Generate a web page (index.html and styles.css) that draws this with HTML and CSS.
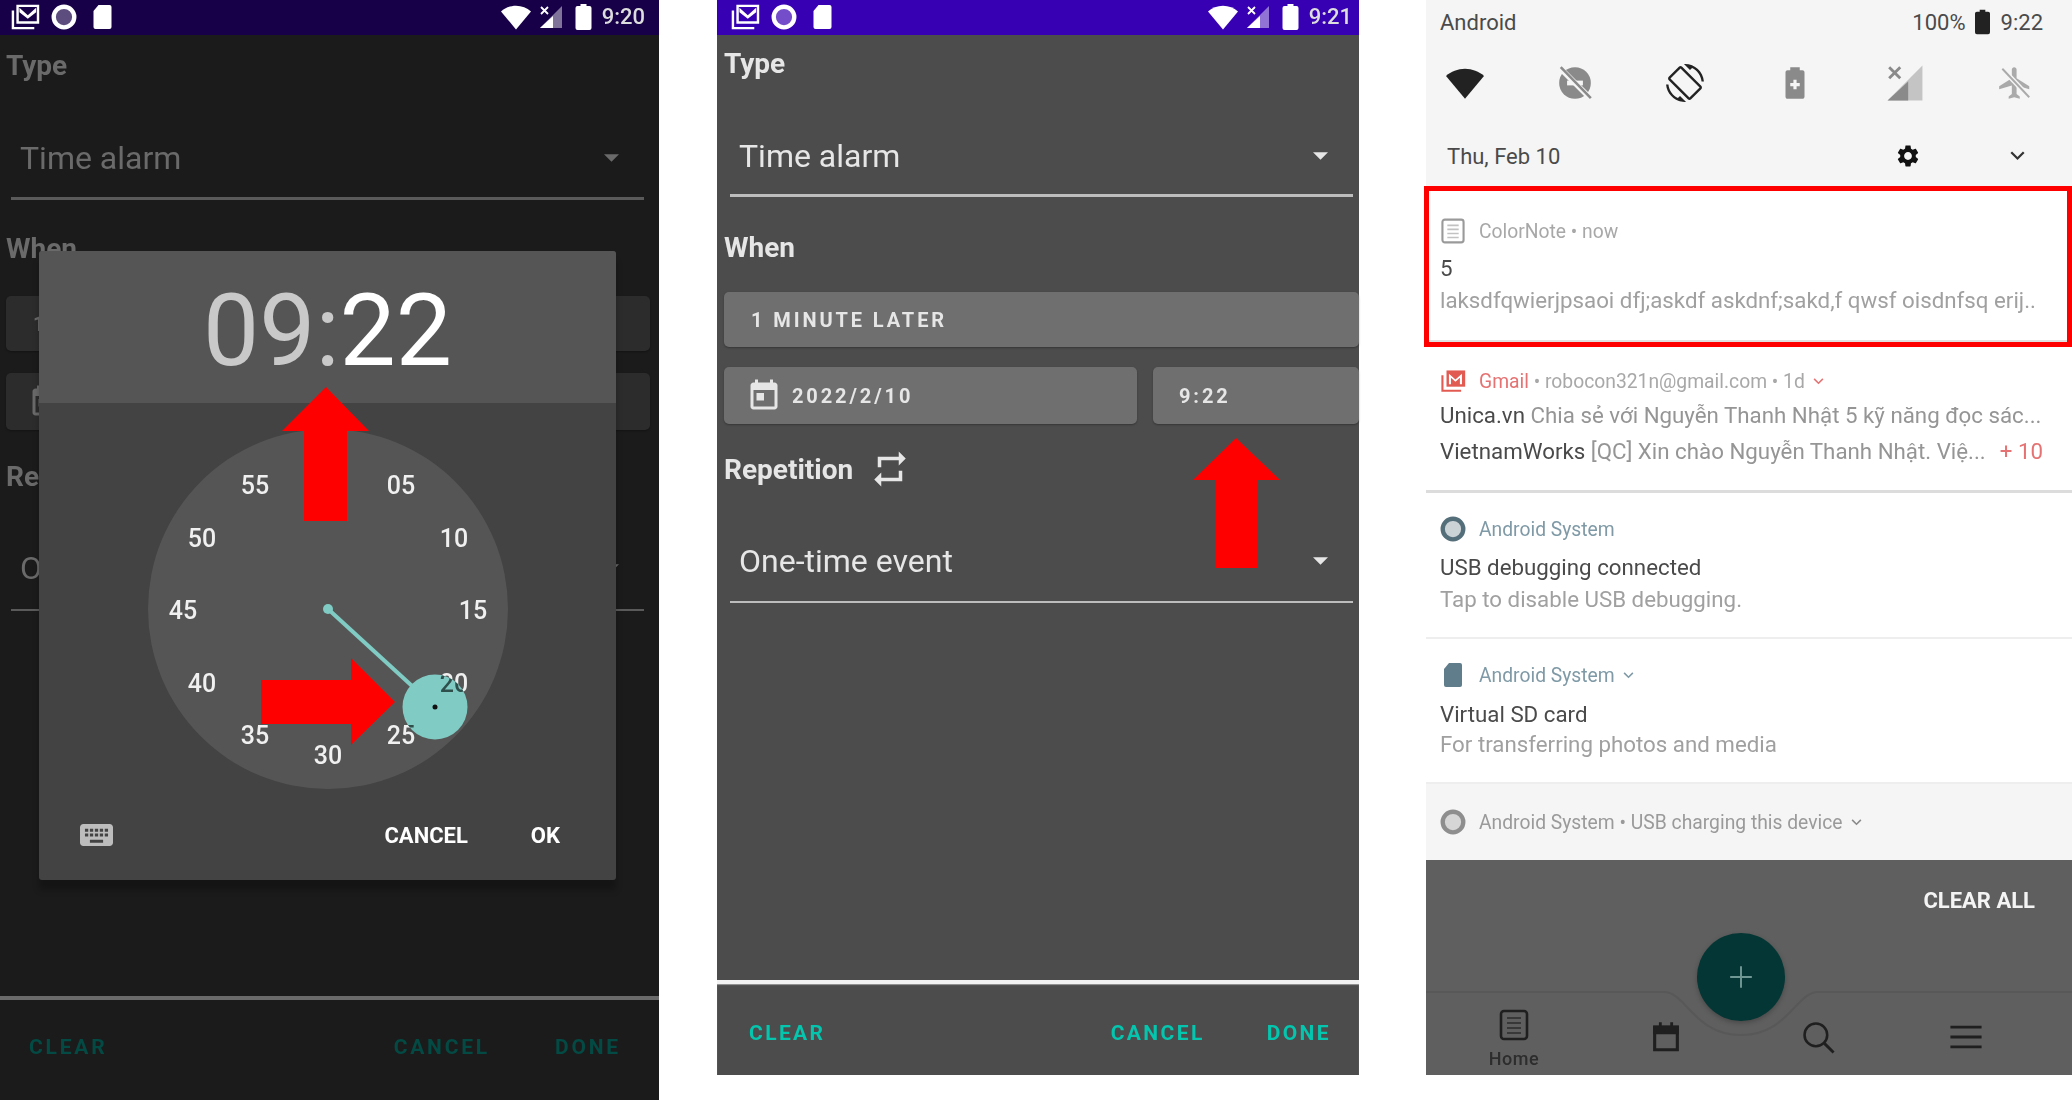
FILE: index.html
```html
<!DOCTYPE html>
<html lang="en">
<head>
  <meta charset="UTF-8">
  <title>Time alarm screens</title>
  <link rel="stylesheet" href="styles.css">
</head>
<body>
  <!-- shared icons -->
  <svg class="icon-defs" aria-hidden="true">
    <symbol id="i-mail" viewBox="0 0 32 28">
      <path d="M8 2h22v18H8z" fill="none" stroke="currentColor" stroke-width="2.6"/>
      <path d="M3 7v19h23" fill="none" stroke="currentColor" stroke-width="2.6"/>
      <path d="M10 4l9 8 9-8v5l-9 7-9-7z" fill="currentColor"/>
    </symbol>
    <symbol id="i-ring" viewBox="0 0 24 24">
      <circle cx="12" cy="12" r="9.5" fill="currentColor" fill-opacity=".3" stroke="currentColor" stroke-width="4"/>
    </symbol>
    <symbol id="i-sd" viewBox="0 0 20 26">
      <path d="M6 1h11a2 2 0 0 1 2 2v20a2 2 0 0 1-2 2H3a2 2 0 0 1-2-2V7z" fill="currentColor"/>
    </symbol>
    <symbol id="i-wifi" viewBox="0 0 24 24">
      <path d="M12 22L0 7.5C3.2 4.8 7.4 3 12 3s8.800 1.800 12 4.500z" fill="currentColor"/>
    </symbol>
    <symbol id="i-signal" viewBox="0 0 24 24">
      <path d="M23 1v22H1z" fill="currentColor" opacity=".45"/>
      <path d="M14 11v12H1z" fill="currentColor"/>
      <path d="M2 2l7 7M9 2L2 9" stroke="currentColor" stroke-width="1.800" fill="none"/>
    </symbol>
    <symbol id="i-battery" viewBox="0 0 16 26">
      <path d="M5 0h6v2h3a2 2 0 0 1 2 2v20a2 2 0 0 1-2 2H2a2 2 0 0 1-2-2V4a2 2 0 0 1 2-2h3z" fill="currentColor"/>
    </symbol>
    <symbol id="i-caret" viewBox="0 0 16 8">
      <path d="M0 0h16L8 8z" fill="currentColor"/>
    </symbol>
    <symbol id="i-today" viewBox="0 0 24 24">
      <path d="M19 3h-1V1h-2v2H8V1H6v2H5c-1.110 0-1.990.9-1.990 2L3 19c0 1.100.89 2 2 2h14c1.100 0 2-.9 2-2V5c0-1.100-.9-2-2-2zm0 16H5V8h14v11zM7 10h5v5H7z" fill="currentColor"/>
    </symbol>
    <symbol id="i-chevron" viewBox="0 0 12 8">
      <path d="M1 1l5 5 5-5" fill="none" stroke="currentColor" stroke-width="1.800"/>
    </symbol>
    <symbol id="i-doc" viewBox="0 0 30 32">
      <rect x="2" y="2" width="26" height="28" rx="3" fill="none" stroke="currentColor" stroke-width="2.600"/>
      <path d="M8 9h14M8 14h14M8 19h14M8 24h14" stroke="currentColor" stroke-width="2" opacity=".6"/>
    </symbol>
  </svg>

  <main class="sheet">
    <!-- first screen: dialog open -->
    <section class="phone phone-dim">
      <div class="screen">
        <div class="status-bar">
          <svg class="st-mail"><use href="#i-mail"/></svg>
          <svg class="st-ring"><use href="#i-ring"/></svg>
          <svg class="st-sd"><use href="#i-sd"/></svg>
          <span class="status-right">
            <svg class="st-wifi"><use href="#i-wifi"/></svg>
            <svg class="st-signal"><use href="#i-signal"/></svg>
            <svg class="st-battery"><use href="#i-battery"/></svg>
            <span class="st-time">9:20</span>
          </span>
        </div>
        <div class="form">
          <div class="label label-type">Type</div>
          <div class="select select-type"><span>Time alarm</span><svg class="caret"><use href="#i-caret"/></svg></div>
          <div class="label label-when">When</div>
          <div class="btn btn-later">1 MINUTE LATER</div>
          <div class="date-row">
            <div class="btn btn-date"><svg class="today"><use href="#i-today"/></svg>2022/2/10</div>
            <div class="btn btn-time">9:22</div>
          </div>
          <div class="label label-rep">Repetition</div>
          <div class="select select-rep"><span>One-time event</span><svg class="caret"><use href="#i-caret"/></svg></div>
        </div>
        <div class="footer">
          <span class="foot-clear">CLEAR</span>
          <span class="foot-cancel">CANCEL</span>
          <span class="foot-done">DONE</span>
        </div>

        <div class="dialog">
          <div class="dialog-head"><span class="dim-time">09:</span>22</div>
          <svg class="dial" viewBox="0 0 360 360">
            <defs>
              <clipPath id="handle-clip"><circle cx="287" cy="278" r="32.500"/></clipPath>
            </defs>
            <circle cx="180" cy="180" r="180" fill="#555"/>
            <g class="dial-nums">
              <text x="107" y="56">55</text>
              <text x="253" y="56">05</text>
              <text x="54" y="109">50</text>
              <text x="306" y="109">10</text>
              <text x="35" y="181">45</text>
              <text x="325" y="181">15</text>
              <text x="54" y="254">40</text>
              <text x="306" y="254">20</text>
              <text x="107" y="306">35</text>
              <text x="253" y="306">25</text>
              <text x="180" y="326">30</text>
            </g>
            <line x1="180" y1="180" x2="287" y2="278" stroke="#80cbc4" stroke-width="4"/>
            <circle cx="180" cy="180" r="5" fill="#80cbc4"/>
            <circle cx="287" cy="278" r="32.500" fill="#80cbc4"/>
            <g class="dial-nums dial-nums-on" clip-path="url(#handle-clip)">
              <text x="306" y="254">20</text>
              <text x="253" y="306">25</text>
            </g>
            <circle cx="287" cy="278" r="2.500" fill="#111"/>
          </svg>
          <div class="dialog-actions">
            <svg class="keyboard" viewBox="2 5 20 14" preserveAspectRatio="none"><path d="M20 5H4c-1.100 0-1.990.9-1.990 2L2 17c0 1.100.9 2 2 2h16c1.100 0 2-.9 2-2V7c0-1.100-.9-2-2-2zm-9 3h2v2h-2V8zm0 3h2v2h-2v-2zM8 8h2v2H8V8zm0 3h2v2H8v-2zm-1 2H5v-2h2v2zm0-3H5V8h2v2zm9 7H8v-2h8v2zm0-4h-2v-2h2v2zm0-3h-2V8h2v2zm3 3h-2v-2h2v2zm0-3h-2V8h2v2z" fill="currentColor"/></svg>
            <span class="act-cancel">CANCEL</span>
            <span>OK</span>
          </div>
        </div>
      </div>
      <svg class="arrows" viewBox="0 0 659 1100">
        <polygon points="326,387 369,431 347,431 347,521 304,521 304,431 282,431"/>
        <polygon points="261,680 351,680 351,658 395,702 351,745 351,724 261,724"/>
      </svg>
    </section>

    <!-- second screen: form -->
    <section class="phone phone-form">
      <div class="screen">
        <div class="status-bar">
          <svg class="st-mail"><use href="#i-mail"/></svg>
          <svg class="st-ring"><use href="#i-ring"/></svg>
          <svg class="st-sd"><use href="#i-sd"/></svg>
          <span class="status-right">
            <svg class="st-wifi"><use href="#i-wifi"/></svg>
            <svg class="st-signal"><use href="#i-signal"/></svg>
            <svg class="st-battery"><use href="#i-battery"/></svg>
            <span class="st-time">9:21</span>
          </span>
        </div>
        <div class="form">
          <div class="label label-type">Type</div>
          <div class="select select-type"><span>Time alarm</span><svg class="caret"><use href="#i-caret"/></svg></div>
          <div class="label label-when">When</div>
          <div class="btn btn-later">1 MINUTE LATER</div>
          <div class="date-row">
            <div class="btn btn-date"><svg class="today"><use href="#i-today"/></svg>2022/2/10</div>
            <div class="btn btn-time">9:22</div>
          </div>
          <div class="label label-rep">Repetition
            <svg class="repeat" viewBox="0 0 24 24"><path d="M7 7h10v3l4-4-4-4v3H5v6h2V7zm10 10H7v-3l-4 4 4 4v-3h12v-6h-2v4z" fill="currentColor"/></svg>
          </div>
          <div class="select select-rep"><span>One-time event</span><svg class="caret"><use href="#i-caret"/></svg></div>
        </div>
        <div class="footer">
          <span class="foot-clear">CLEAR</span>
          <span class="foot-cancel">CANCEL</span>
          <span class="foot-done">DONE</span>
        </div>
      </div>
      <svg class="arrows" viewBox="0 0 642 1075">
        <polygon points="519,438 563,480 541,480 541,568 498,568 498,480 476,480"/>
      </svg>
    </section>

    <!-- third screen: notification shade -->
    <section class="phone phone-shade">
      <div class="screen">
        <header class="shade-head">
          <div class="shade-top">
            <span>Android</span>
            <span class="shade-top-right">100%
              <svg class="shade-batt"><use href="#i-battery"/></svg>
              <span class="shade-time">9:22</span>
            </span>
          </div>
          <div class="tiles">
            <svg class="tile tile-on"><use href="#i-wifi"/></svg>
            <svg class="tile" viewBox="0 0 24 24">
              <circle cx="12" cy="12" r="10" fill="#8a8a8a"/>
              <rect x="7" y="10.500" width="10" height="3" fill="#f5f5f5"/>
              <path d="M2.500 2.500l19 19" stroke="#f5f5f5" stroke-width="3.500"/>
              <path d="M3 2l19 19.500" stroke="#8a8a8a" stroke-width="1.600"/>
            </svg>
            <svg class="tile tile-on" viewBox="0 0 24 24"><path d="M16.480 2.520c3.270 1.550 5.610 4.720 5.970 8.480h1.500C23.440 4.840 18.290 0 12 0l-.66.03 3.810 3.810 1.330-1.320zm-6.250-.77c-.59-.59-1.540-.59-2.120 0L1.750 8.110c-.59.59-.59 1.540 0 2.120l12.020 12.020c.59.59 1.540.59 2.120 0l6.360-6.360c.59-.59.59-1.540 0-2.120L10.230 1.750zm4.600 19.440L2.810 9.170l6.360-6.360 12.020 12.020-6.360 6.360zm-7.310.29C4.250 19.940 1.910 16.760 1.550 13H.05C.56 19.160 5.710 24 12 24l.66-.03-3.810-3.810-1.330 1.320z" fill="currentColor"/></svg>
            <svg class="tile tile-off" viewBox="0 0 24 24"><path d="M16.670 4H15V2H9v2H7.330C6.600 4 6 4.600 6 5.330v15.330C6 21.400 6.600 22 7.330 22h9.330c.74 0 1.340-.6 1.340-1.330V5.330C18 4.600 17.400 4 16.670 4zM15 14h-2v2h-2v-2H9v-2h2v-2h2v2h2v2z" fill="currentColor"/></svg>
            <svg class="tile tile-off"><use href="#i-signal"/></svg>
            <svg class="tile tile-plane" viewBox="0 0 24 24">
              <path d="M21 16v-2l-8-5V3.500c0-.83-.67-1.500-1.500-1.500S10 2.670 10 3.500V9l-8 5v2l8-2.500V19l-2 1.500V22l3.500-1 3.500 1v-1.500L13 19v-5.500l8 2.500z" fill="currentColor"/>
              <path d="M4 3l17 18" stroke="#f5f5f5" stroke-width="3"/>
              <path d="M4 3l17 18" stroke="currentColor" stroke-width="1.200"/>
            </svg>
          </div>
          <div class="shade-date">
            <span>Thu, Feb 10</span>
            <svg class="gear" viewBox="0 0 24 24"><path d="M19.140 12.940c.04-.3.06-.61.06-.94 0-.32-.02-.64-.07-.94l2.030-1.580c.18-.14.23-.41.12-.61l-1.920-3.320c-.12-.22-.37-.29-.59-.22l-2.390.96c-.5-.38-1.030-.7-1.620-.94l-.36-2.540c-.04-.24-.24-.41-.48-.41h-3.840c-.24 0-.43.17-.47.41l-.36 2.540c-.59.24-1.130.57-1.620.94l-2.390-.96c-.22-.08-.47 0-.59.22L2.740 8.870c-.12.21-.08.47.12.61l2.030 1.580c-.05.3-.09.63-.09.94s.02.64.07.94l-2.030 1.580c-.18.14-.23.41-.12.61l1.920 3.320c.12.22.37.29.59.22l2.390-.96c.5.38 1.030.7 1.620.94l.36 2.540c.05.24.24.41.48.41h3.840c.24 0 .44-.17.47-.41l.36-2.540c.59-.24 1.130-.56 1.620-.94l2.390.96c.22.08.47 0 .59-.22l1.920-3.320c.12-.22.07-.47-.12-.61l-2.010-1.580zM12 15.600c-1.980 0-3.600-1.620-3.600-3.600s1.620-3.600 3.600-3.600 3.600 1.620 3.600 3.600-1.620 3.600-3.600 3.600z" fill="currentColor"/></svg>
            <svg class="date-chevron"><use href="#i-chevron"/></svg>
          </div>
        </header>

        <div class="notif notif-note">
          <div class="notif-app">
            <svg class="app-icon app-note"><use href="#i-doc"/></svg>
            <span>ColorNote • now</span>
          </div>
          <div class="notif-title">5</div>
          <div class="notif-text">laksdfqwierjpsaoi dfj;askdf askdnf;sakd,f qwsf oisdnfsq erij..</div>
        </div>

        <div class="notif notif-gmail">
          <div class="notif-app">
            <svg class="app-icon app-gmail" viewBox="0 0 32 28">
              <path d="M8 1h23v20H8z" fill="#e25b52"/>
              <path d="M11 18V5l8 7 8-7v13h-2.500V10L19 15l-5.500-5v8z" fill="#fff"/>
              <path d="M3 7v19h23" fill="none" stroke="#e25b52" stroke-width="2.600"/>
            </svg>
            <span><em class="gmail-name">Gmail</em> • robocon321n@gmail.com • 1d</span>
            <svg class="app-chevron gmail-chevron"><use href="#i-chevron"/></svg>
          </div>
          <div class="notif-line"><b>Unica.vn</b> Chia sẻ với Nguyễn Thanh Nhật 5 kỹ năng đọc sác...</div>
          <div class="notif-line notif-line-more"><span class="line-clip"><b>VietnamWorks</b> [QC] Xin chào Nguyễn Thanh Nhật. Việ...</span><span class="more">+ 10</span></div>
        </div>

        <div class="notif notif-usb">
          <div class="notif-app app-sys">
            <svg class="app-icon app-ring"><use href="#i-ring"/></svg>
            <span>Android System</span>
          </div>
          <div class="notif-title">USB debugging connected</div>
          <div class="notif-text">Tap to disable USB debugging.</div>
        </div>

        <div class="notif notif-sd">
          <div class="notif-app app-sys">
            <svg class="app-icon app-sdcard"><use href="#i-sd"/></svg>
            <span>Android System</span>
            <svg class="app-chevron"><use href="#i-chevron"/></svg>
          </div>
          <div class="notif-title">Virtual SD card</div>
          <div class="notif-text">For transferring photos and media</div>
        </div>

        <div class="notif-summary">
          <svg class="app-icon app-ring-gray"><use href="#i-ring"/></svg>
          <span>Android System • USB charging this device</span>
          <svg class="app-chevron"><use href="#i-chevron"/></svg>
        </div>

        <div class="panel">
          <svg class="notch" viewBox="0 0 646 215">
            <path d="M0 132H238c22 0 30 43 77 43s55-43 77-43H646" fill="none" stroke="#585858" stroke-width="2"/>
          </svg>
          <div class="clear-all">CLEAR ALL</div>
          <div class="fab">
            <svg viewBox="0 0 24 24"><path d="M12 2v20M2 12h20" stroke="currentColor" stroke-width="1.800"/></svg>
          </div>
          <nav class="nav">
            <div class="nav-item nav-home">
              <svg class="nav-doc"><use href="#i-doc"/></svg>
              <span>Home</span>
            </div>
            <div class="nav-item">
              <svg class="nav-icon" viewBox="0 0 24 24"><path d="M4 5h16v16H4z" fill="none" stroke="currentColor" stroke-width="2.200"/><path d="M3 4h18v6H3zM7 1.500h2V5H7zM15 1.500h2V5h-2z" fill="currentColor"/></svg>
            </div>
            <div class="nav-item">
              <svg class="nav-icon" viewBox="0 0 24 24"><circle cx="10.500" cy="10.500" r="8" fill="none" stroke="currentColor" stroke-width="1.800"/><path d="M16.500 16.500L23 23" stroke="currentColor" stroke-width="2"/></svg>
            </div>
            <div class="nav-item nav-menu">
              <svg class="nav-icon" viewBox="0 0 24 24"><path d="M1 5h22M1 12h22M1 19h22" stroke="currentColor" stroke-width="2"/></svg>
            </div>
          </nav>
        </div>
      </div>
      <div class="red-box"></div>
    </section>
  </main>
</body>
</html>
```

FILE: styles.css
```css
* {
  box-sizing: border-box;
}

body {
  margin: 0;
  background: #fff;
  font-family: Roboto, "Liberation Sans", sans-serif;
  overflow: hidden;
}

.icon-defs {
  position: absolute;
  width: 0;
  height: 0;
}

.sheet {
  display: flex;
  align-items: flex-start;
  height: 1100px;
}

.phone {
  position: relative;
  flex-shrink: 0;
}

.screen {
  display: flex;
  flex-direction: column;
  height: 100%;
  position: relative;
  filter: blur(0.6px);
}

.arrows {
  position: absolute;
  top: 0;
  left: 0;
  width: 100%;
  height: 100%;
  fill: #ff0000;
}

/* Screen sizes */
.phone-dim {
  width: 659px;
  height: 1100px;
  background: #1b1b1b;
  color: #6a6a6a;
}

.phone-form {
  width: 642px;
  height: 1075px;
  margin-left: 58px;
  background: #4c4c4c;
  color: #e6e6e6;
}

.phone-shade {
  width: 646px;
  height: 1075px;
  margin-left: 67px;
  background: #fff;
}

/* Status bar */
.status-bar {
  display: flex;
  align-items: center;
  height: 35px;
  flex-shrink: 0;
  padding: 0 13px 2px 10px;
  background: #3700b3;
  color: #fff;
}

.phone-dim .status-bar {
  background: #170048;
  padding-right: 14px;
}

.phone-form .status-bar {
  padding-left: 13px;
  padding-right: 7px;
}

.status-bar svg {
  flex-shrink: 0;
}

.st-mail { width: 30px; height: 26px; }
.st-ring { width: 26px; height: 26px; margin-left: 11px; }
.st-sd { width: 21px; height: 26px; margin-left: 15px; }

.status-right {
  display: flex;
  align-items: center;
  margin-left: auto;
}

.st-wifi { width: 30px; height: 30px; }
.st-signal { width: 24px; height: 24px; margin-left: 8px; }
.st-battery { width: 17px; height: 26px; margin-left: 12px; }

.st-time {
  margin-left: 10px;
  font-size: 22px;
  font-weight: 500;
  color: #ddd;
}

/* Form */
.form {
  flex: 1;
  display: flex;
  flex-direction: column;
  padding-left: 7px;
}

.phone-dim .form {
  padding-left: 6px;
}

.label {
  display: flex;
  align-items: center;
  height: 36px;
  font-size: 28px;
  font-weight: 700;
  white-space: nowrap;
}

.label-type { margin-top: 10px; }
.label-when { margin-top: 32px; }
.label-rep { margin-top: 27px; }

.phone-dim .label-type { margin-top: 12px; }
.phone-dim .label-when { margin-top: 30px; }
.phone-dim .label-rep { margin-top: 28px; }

.repeat {
  width: 42px;
  height: 42px;
  margin-left: 16px;
}

.select {
  display: flex;
  align-items: center;
  margin: 33px 6px 0 6px;
  padding: 3px 25px 0 9px;
  border-bottom: 3px solid #bdbdbd;
  font-size: 32px;
  height: 83px;
}

.select-rep {
  height: 84px;
  margin-top: 32px;
  padding-top: 1px;
  border-bottom-width: 2px;
}

.phone-dim .select {
  height: 84px;
  margin-left: 5px;
  margin-right: 15px;
  padding-top: 2px;
  border-color: #5a5a5a;
}

.phone-dim .select-rep {
  margin-top: 33px;
  padding-top: 0;
}

.caret {
  width: 15px;
  height: 8px;
  margin-left: auto;
}

.btn {
  display: flex;
  align-items: center;
  border-radius: 5px;
  background: #6f6f6f;
  font-size: 20px;
  font-weight: 700;
  letter-spacing: 2.9px;
  white-space: nowrap;
  box-shadow: 0 1px 2px rgba(0, 0, 0, 0.3);
}

.phone-dim .btn {
  background: #2c2c2c;
  margin-right: 9px;
}

.btn-later {
  height: 55px;
  margin-top: 27px;
  padding-left: 27px;
}

.date-row {
  display: flex;
  gap: 16px;
  margin-top: 20px;
}

.phone-dim .btn-later { margin-top: 30px; }
.phone-dim .date-row { margin-top: 22px; }

.btn-date {
  width: 413px;
  height: 57px;
  padding-left: 22px;
}

.btn-time {
  flex: 1;
  height: 57px;
  padding-left: 26px;
}

.today {
  width: 36px;
  height: 36px;
  margin-right: 10px;
}

/* Bottom actions */
.footer {
  flex-shrink: 0;
  display: flex;
  align-items: center;
  height: 95px;
  padding-top: 6px;
  border-top: 4px solid #f2f2f2;
  font-size: 21px;
  font-weight: 700;
  letter-spacing: 2.4px;
  color: #04c5ae;
  box-shadow: inset 0 1px 1px #999;
}

.phone-dim .footer {
  height: 104px;
  padding-top: 0;
  padding-bottom: 6px;
  border-top-color: #6a6a6a;
  letter-spacing: 2.8px;
  color: #044a44;
  box-shadow: none;
}

.foot-clear { margin-left: 32px; }
.foot-cancel { margin-left: auto; }
.foot-done { margin: 0 28px 0 62px; }

.phone-dim .foot-clear { margin-left: 29px; }
.phone-dim .foot-done { margin: 0 38px 0 65px; }

/* Time picker dialog */
.dialog {
  position: absolute;
  top: 251px;
  left: 39px;
  width: 577px;
  height: 629px;
  border-radius: 3px;
  background: #434343;
  color: #fff;
  box-shadow: 0 10px 6px rgba(0, 0, 0, 0.25);
  display: flex;
  flex-direction: column;
  align-items: center;
}

.dialog-head {
  width: 100%;
  height: 152px;
  background: #555;
  font-size: 100px;
  line-height: 160px;
  text-align: center;
  border-radius: 3px 3px 0 0;
}

.dim-time {
  color: #c9c9c9;
}

.dial {
  width: 360px;
  height: 360px;
  margin-top: 26px;
  flex-shrink: 0;
}

.dial-nums text {
  fill: #f0f0f0;
  font-size: 25px;
  font-weight: 500;
  text-anchor: middle;
  dominant-baseline: central;
}

.dial-nums-on text {
  fill: #2f4f4c;
}

.dialog-actions {
  display: flex;
  align-items: center;
  gap: 63px;
  width: 100%;
  height: 60px;
  margin-top: 16px;
  padding: 0 56px 0 41px;
  font-size: 22px;
  font-weight: 700;
}

.keyboard {
  width: 33px;
  height: 22px;
  color: #bdbdbd;
}

.act-cancel {
  margin-left: auto;
}

/* Notification shade */
.shade-head {
  flex-shrink: 0;
  height: 187px;
  background: #f5f5f5;
  color: #4a4a4a;
  font-size: 22px;
}

.shade-top {
  display: flex;
  justify-content: space-between;
  align-items: center;
  height: 44px;
  padding: 0 29px 0 14px;
}

.shade-top-right {
  display: flex;
  align-items: center;
}

.shade-batt {
  width: 15px;
  height: 26px;
  margin-left: 9px;
  color: #222;
}

.shade-time {
  margin-left: 11px;
}

.tiles {
  display: flex;
  justify-content: space-between;
  padding: 0 38px 0 20px;
  height: 50px;
  margin-top: 20px;
}

.tile {
  width: 38px;
  height: 38px;
  color: #8a8a8a;
}

.tile-on {
  color: #222;
}

.tile-plane {
  color: #aaa;
}

.shade-date {
  display: flex;
  align-items: center;
  height: 36px;
  margin-top: 24px;
  padding-left: 21px;
}

.gear {
  width: 26px;
  height: 26px;
  margin-left: auto;
  color: #111;
}

.date-chevron {
  width: 15px;
  height: 10px;
  margin: 0 47px 0 89px;
  color: #333;
}

.notif {
  flex-shrink: 0;
  padding: 22px 14px 23px;
  border-bottom: 2px solid #eeeeee;
  color: #a0a0a0;
  font-size: 22.3px;
  white-space: nowrap;
}

.notif-note {
  height: 156px;
  padding-top: 30px;
  border-bottom: 3px solid #e0e0e0;
}

.notif-gmail {
  height: 150px;
  padding-top: 24px;
  border-bottom: 3px solid #dcdcdc;
}

.notif-usb {
  height: 146px;
}

.notif-sd {
  height: 143px;
  border-bottom: 0;
}

.notif-app {
  display: flex;
  align-items: center;
  height: 28px;
  font-size: 19.3px;
  color: #a8a8a8;
}

.app-sys {
  color: #7f9aa6;
}

.app-icon {
  width: 26px;
  height: 26px;
  flex-shrink: 0;
  margin-right: 13px;
}

.app-note {
  color: #9a9a9a;
}

.app-ring {
  color: #546e7a;
}

.app-sdcard {
  color: #607d8b;
}

.app-ring-gray {
  color: #8e8e8e;
}

.app-chevron {
  width: 11px;
  height: 7px;
  margin-left: 8px;
  color: #7f9aa6;
}

.gmail-name {
  font-style: normal;
  color: #e57373;
}

.gmail-chevron {
  color: #e57373;
}

.notif-title {
  height: 30px;
  margin-top: 9px;
  line-height: 30px;
  color: #4a4a4a;
}

.notif-text {
  height: 30px;
  margin-top: 2px;
  line-height: 30px;
}

.notif-sd .notif-title { margin-top: 10px; }
.notif-sd .notif-text { margin-top: 0; }
.notif-note .notif-title { margin-top: 8px; }

.notif-line {
  height: 30px;
  margin-top: 5px;
  line-height: 30px;
  color: #959595;
}

.notif-line-more {
  display: flex;
  justify-content: space-between;
  margin-top: 6px;
}

.notif-line b {
  font-weight: 400;
  color: #4a4a4a;
}

.more {
  padding-right: 15px;
  color: #e57373;
}

.notif-summary {
  flex-shrink: 0;
  display: flex;
  align-items: center;
  height: 78px;
  padding: 0 14px;
  background: #f5f5f5;
  border-top: 2px solid #eeeeee;
  font-size: 19.3px;
  color: #9a9a9a;
}

.notif-summary .app-chevron {
  color: #8a8a8a;
}

.panel {
  position: relative;
  flex: 1;
  display: flex;
  flex-direction: column;
  background: #5f5f5f;
}

.notch {
  position: absolute;
  top: 0;
  left: 0;
  width: 100%;
  height: 100%;
}

.clear-all {
  position: relative;
  align-self: flex-end;
  margin: 27px 37px 0 0;
  font-size: 22px;
  font-weight: 700;
  line-height: 28px;
  color: #f4f4f4;
}

.fab {
  position: absolute;
  top: 73px;
  left: 271px;
  width: 88px;
  height: 88px;
  border-radius: 50%;
  background: #033634;
  color: #6f9794;
  display: flex;
  align-items: center;
  justify-content: center;
  box-shadow: 0 2px 5px rgba(0, 0, 0, 0.25);
}

.fab svg {
  width: 26px;
  height: 26px;
}

.nav {
  position: relative;
  display: flex;
  margin-top: auto;
  height: 70px;
  padding-left: 12px;
  color: #1f1f1f;
}

.nav-item {
  display: flex;
  flex-direction: column;
  align-items: center;
  width: 152px;
}

.nav-menu {
  margin-left: -4px;
}

.nav-home {
  margin-top: 4px;
  height: 66px;
}

.nav-doc {
  width: 30px;
  height: 32px;
}

.nav-home span {
  margin-top: 7px;
  font-size: 18px;
  font-weight: 500;
  letter-spacing: 0.5px;
  color: #2d2d2d;
}

.nav-icon {
  width: 34px;
  height: 34px;
  margin-top: 15px;
}

.red-box {
  position: absolute;
  top: 186px;
  left: -2px;
  width: 648px;
  height: 161px;
  border: 5px solid #ff0000;
}
```
